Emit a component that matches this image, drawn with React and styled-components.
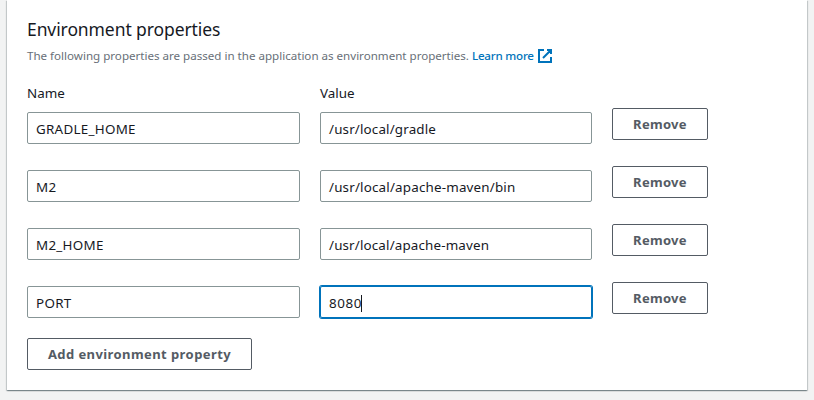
import React from 'react';
import styled, { createGlobalStyle } from 'styled-components';

const Global = createGlobalStyle`
  * { box-sizing: border-box; }
  body { margin: 0; background: #f2f3f3; font-family: "Noto Sans", sans-serif; color: #16191f; }
`;
const Page = styled.main`
  height: 400px;
  padding: 0 7px 10px;
  overflow: hidden;
`;
const Panel = styled.section`
  height: 390px;
  padding: 17px 20px 0;
  background: #fff;
  box-shadow: 0 1px 1px rgba(0, 28, 36, 0.3), 1px 1px 1px rgba(0, 28, 36, 0.15), -1px 1px 1px rgba(0, 28, 36, 0.15);
`;
const Title = styled.h2`
  margin: 0;
  font-size: 17.5px;
  line-height: 24px;
  font-weight: 400;
  letter-spacing: -0.09px;
`;
const Description = styled.p`
  display: flex;
  align-items: center;
  margin: 5px 0 0;
  height: 20px;
  font-size: 11.6px;
  line-height: 20px;
  letter-spacing: -0.01px;
  color: #687078;
  white-space: nowrap;
`;
const Link = styled.a`
  display: flex;
  align-items: center;
  gap: 3px;
  margin-left: 3px;
  color: #0073bb;
  font-weight: 500;
  letter-spacing: -0.22px;
`;
const ExternalIcon = styled.svg`
  width: 16px;
  height: 16px;
  fill: none;
  stroke: currentColor;
  stroke-width: 2;
`;
const Labels = styled.div`
  display: grid;
  grid-template-columns: 273px 272px;
  column-gap: 20px;
  margin-top: 16px;
  font-size: 13.4px;
  line-height: 22px;
`;
const Row = styled.div`
  display: grid;
  grid-template-columns: 273px 272px 96px;
  column-gap: 20px;
  height: 58px;
`;
const Field = styled.div`
  display: flex;
  align-items: center;
  height: 32px;
  margin-top: 8px;
  padding: 2px 9px 0 8px;
  border: 1px solid ${(p) => (p.$focused ? '#0073bb' : '#879596')};
  border-radius: 2px;
  box-shadow: ${(p) => (p.$focused ? '0 0 0 1px #0073bb' : 'none')};
  font-size: 13.4px;
  letter-spacing: ${(p) => p.$tracking}px;
`;
const Caret = styled.span`
  width: 1px;
  height: 17px;
  margin-left: -1px;
  background: #16191f;
`;
const Button = styled.button`
  height: 32px;
  padding: 0;
  margin-top: 4px;
  border: 1px solid #545b64;
  border-radius: 2px;
  background: #fff;
  color: #545b64;
  font: 700 13px "Noto Sans", sans-serif;
  letter-spacing: 0.3px;
`;
const AddButton = styled(Button)`
  width: 225px;
  margin-top: 2px;
  letter-spacing: 0.42px;
`;
const rows = [
  { name: 'GRADLE_HOME', value: '/usr/local/gradle', nameTracking: 0.27, valueTracking: 0.16 },
  { name: 'M2', value: '/usr/local/apache-maven/bin', nameTracking: 0.25, valueTracking: 0.18 },
  { name: 'M2_HOME', value: '/usr/local/apache-maven', nameTracking: 0.27, valueTracking: 0.15 },
  { name: 'PORT', value: '8080', nameTracking: 0.3, valueTracking: 0.6, focused: true },
];
export default function App() {
  return (
    <Page>
      <Global />
      <Panel>
        <Title>Environment properties</Title>
        <Description>
          The following properties are passed in the application as environment properties.
          <Link>
            Learn more
            <ExternalIcon viewBox="0 0 16 16" aria-hidden="true">
              <path d="M10 2h4v4M6 10l8-8M14 9.048V14H2V2h5" />
            </ExternalIcon>
          </Link>
        </Description>
        <Labels>
          <span>Name</span>
          <span>Value</span>
        </Labels>
        {rows.map((row) => (
          <Row key={row.name}>
            <Field $tracking={row.nameTracking}>{row.name}</Field>
            <Field $tracking={row.valueTracking} $focused={row.focused}>
              {row.value}
              {row.focused && <Caret />}
            </Field>
            <Button>Remove</Button>
          </Row>
        ))}
        <AddButton>Add environment property</AddButton>
      </Panel>
    </Page>
  );
}
